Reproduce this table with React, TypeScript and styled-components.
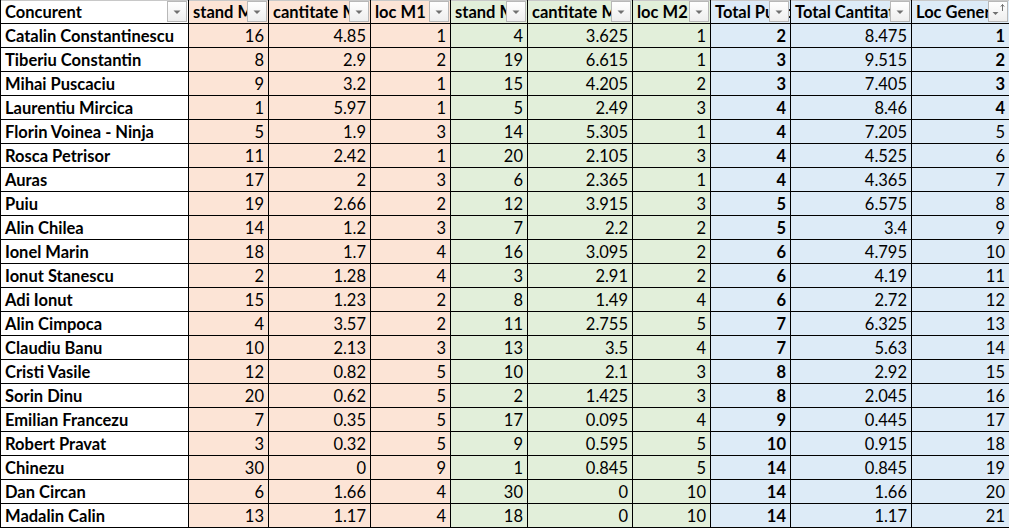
import React from "react";
import styled, { createGlobalStyle } from "styled-components";

const Global = createGlobalStyle`
  html, body { margin: 0; padding: 0; background: #ffffff; overflow: hidden; }
  body { font-family: Lato, "Open Sans", "Liberation Sans", sans-serif; }
`;

type Tone = "white" | "peach" | "green" | "blue";

const toneBg: Record<Tone, string> = {
  white: "#ffffff",
  peach: "#FCE4D6",
  green: "#E2EFDA",
  blue: "#DDEBF7",
};

const Sheet = styled.div`
  display: grid;
  grid-template-columns: 187px 79px 101px 79px 76px 104px 77px 79px 120px 97px;
  grid-auto-rows: 23px;
  gap: 1px;
  padding: 0 0 1px 1px;
  background: #000000;
  width: max-content;
  font-size: 16.5px;
  color: #000000;
`;

const HeaderCell = styled.div<{ $tone: Tone }>`
  position: relative;
  background: ${(p) => toneBg[p.$tone]};
  box-shadow: inset 0 1px 0 #c8c8c8;
  font-weight: 700;
  line-height: 23px;
  padding: 1px 0 0 4px;
  box-sizing: border-box;
  white-space: nowrap;
  overflow: hidden;
`;

const FilterButton = styled.div`
  position: absolute;
  right: 1px;
  top: 1px;
  width: 20px;
  height: 21px;
  box-sizing: border-box;
  border: 1px solid #b8b8b8;
  background: linear-gradient(#ffffff, #eeeeee);
  display: flex;
  align-items: center;
  justify-content: center;
`;

const NameCell = styled.div`
  background: #ffffff;
  font-weight: 700;
  line-height: 23px;
  padding: 1px 0 0 4px;
  box-sizing: border-box;
  white-space: nowrap;
  overflow: hidden;
`;

const NumCell = styled.div<{ $tone: Tone; $bold?: boolean }>`
  background: ${(p) => toneBg[p.$tone]};
  font-weight: ${(p) => (p.$bold ? 700 : 400)};
  text-align: right;
  line-height: 23px;
  padding: 1px 4px 0 0;
  box-sizing: border-box;
  white-space: nowrap;
  overflow: hidden;
`;

const DropIcon = () => (
  <svg width="18" height="19" viewBox="0 0 18 19">
    <path d="M5.5 8.5 L12.5 8.5 L9 12 Z" fill="#707070" />
  </svg>
);

const SortIcon = () => (
  <svg width="18" height="19" viewBox="0 0 18 19">
    <path d="M3.5 10 L9.5 10 L6.5 13 Z" fill="#707070" />
    <path d="M13.5 2.5 L13.5 9" stroke="#707070" strokeWidth="1" />
    <path d="M11.8 4.6 L13.5 2.5 L15.2 4.6" stroke="#707070" strokeWidth="1" fill="none" />
  </svg>
);

const headers: { label: string; tone: Tone; sorted?: boolean }[] = [
  { label: "Concurent", tone: "white" },
  { label: "stand M1", tone: "peach" },
  { label: "cantitate M1", tone: "peach" },
  { label: "loc M1", tone: "peach" },
  { label: "stand M2", tone: "green" },
  { label: "cantitate M2", tone: "green" },
  { label: "loc M2", tone: "green" },
  { label: "Total Puncte", tone: "blue" },
  { label: "Total Cantitate", tone: "blue" },
  { label: "Loc General", tone: "blue", sorted: true },
];

type Row = [string, number, string, number, number, string, number, number, string, number];

const rows: Row[] = [
  ["Catalin Constantinescu", 16, "4.85", 1, 4, "3.625", 1, 2, "8.475", 1],
  ["Tiberiu Constantin", 8, "2.9", 2, 19, "6.615", 1, 3, "9.515", 2],
  ["Mihai Puscaciu", 9, "3.2", 1, 15, "4.205", 2, 3, "7.405", 3],
  ["Laurentiu Mircica", 1, "5.97", 1, 5, "2.49", 3, 4, "8.46", 4],
  ["Florin Voinea - Ninja", 5, "1.9", 3, 14, "5.305", 1, 4, "7.205", 5],
  ["Rosca Petrisor", 11, "2.42", 1, 20, "2.105", 3, 4, "4.525", 6],
  ["Auras", 17, "2", 3, 6, "2.365", 1, 4, "4.365", 7],
  ["Puiu", 19, "2.66", 2, 12, "3.915", 3, 5, "6.575", 8],
  ["Alin Chilea", 14, "1.2", 3, 7, "2.2", 2, 5, "3.4", 9],
  ["Ionel Marin", 18, "1.7", 4, 16, "3.095", 2, 6, "4.795", 10],
  ["Ionut Stanescu", 2, "1.28", 4, 3, "2.91", 2, 6, "4.19", 11],
  ["Adi Ionut", 15, "1.23", 2, 8, "1.49", 4, 6, "2.72", 12],
  ["Alin Cimpoca", 4, "3.57", 2, 11, "2.755", 5, 7, "6.325", 13],
  ["Claudiu Banu", 10, "2.13", 3, 13, "3.5", 4, 7, "5.63", 14],
  ["Cristi Vasile", 12, "0.82", 5, 10, "2.1", 3, 8, "2.92", 15],
  ["Sorin Dinu", 20, "0.62", 5, 2, "1.425", 3, 8, "2.045", 16],
  ["Emilian Francezu", 7, "0.35", 5, 17, "0.095", 4, 9, "0.445", 17],
  ["Robert Pravat", 3, "0.32", 5, 9, "0.595", 5, 10, "0.915", 18],
  ["Chinezu", 30, "0", 9, 1, "0.845", 5, 14, "0.845", 19],
  ["Dan Circan", 6, "1.66", 4, 30, "0", 10, 14, "1.66", 20],
  ["Madalin Calin", 13, "1.17", 4, 18, "0", 10, 14, "1.17", 21],
];

const tones: Tone[] = ["white", "peach", "peach", "peach", "green", "green", "green", "blue", "blue", "blue"];

export default function App() {
  return (
    <>
      <Global />
      <Sheet>
        {headers.map((h) => (
          <HeaderCell key={h.label} $tone={h.tone}>
            {h.label}
            <FilterButton>{h.sorted ? <SortIcon /> : <DropIcon />}</FilterButton>
          </HeaderCell>
        ))}
        {rows.map((r) => (
          <React.Fragment key={r[0]}>
            <NameCell>{r[0]}</NameCell>
            {r.slice(1).map((v, i) => {
              const col = i + 1;
              const bold = col === 7 || (col === 9 && (r[9] as number) <= 4);
              return (
                <NumCell key={col} $tone={tones[col]} $bold={bold}>
                  {v}
                </NumCell>
              );
            })}
          </React.Fragment>
        ))}
      </Sheet>
    </>
  );
}
